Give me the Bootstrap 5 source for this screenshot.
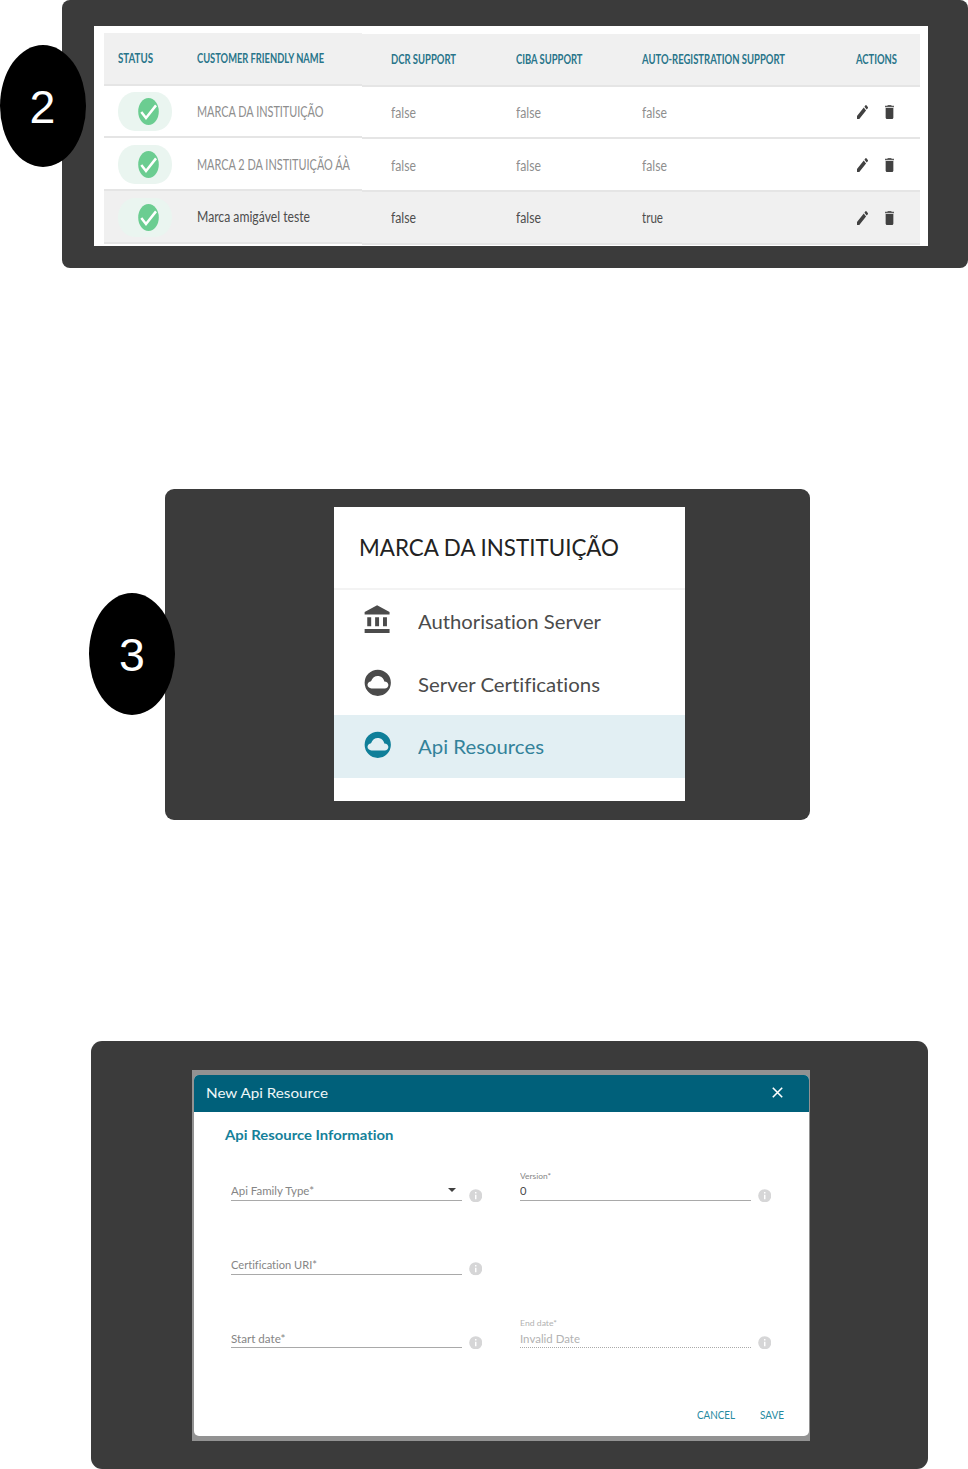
<!DOCTYPE html>
<html lang="pt-BR">
<head>
<meta charset="utf-8">
<meta name="viewport" content="width=device-width, initial-scale=1">
<title>Api Resources</title>
<link href="https://cdn.jsdelivr.net/npm/bootstrap@5.3.0/dist/css/bootstrap.min.css" rel="stylesheet">
<style>
body{font-family:Lato,"Open Sans",sans-serif;font-variant-ligatures:none;background:#fff;width:968px;height:1469px;overflow:hidden;line-height:1.2;color:#4b4b4b}
.panel{background:#3b3b3b}
.panel-a{margin-left:62px;width:906px;height:268px;border-radius:8px;padding:26px 40px 22px 32px}
.panel-b{margin:221px 0 0 165px;width:645px;height:331px;border-radius:9px;padding:18px 125px 19px 169px}
.panel-c{margin:221px 0 0 91px;width:837px;height:428px;border-radius:11px;padding:29px 118px 28px 101px}
.step{position:absolute;width:86px;height:122px;border-radius:50%;background:#000;color:#fff;font:46.5px/124px "Liberation Sans",Arial,sans-serif;text-align:center}
.step-2{left:-62px;top:45px;padding-right:1px}
.step-3{left:-76px;top:104px}
.fit{display:inline-block;white-space:nowrap;transform-origin:0 50%}
svg{display:block;flex:none}
/* brand table */
.sheet{height:220px;padding:6.600px 8px 0 10px}
.half-l{width:258px}
.half-r{width:558px;padding-top:1px}
.line{display:grid;align-items:center;height:52.8px;border-bottom:2px solid #e5e5e5;padding-top:1px;font-size:14.6px;color:#8e8e8e}
.half-l .line{grid-template-columns:79px 165px;padding-left:14px}
.half-r .line{grid-template-columns:124.5px 126px 214px 1fr;padding-left:29px}
.line>*{min-width:0}
.line.head{height:53px;background:#f0f0f0;color:#28758a;font-size:12.5px;font-weight:700}
.line.picked{background:#f0f0f0;color:#4d4d4d}
.pill{width:54px;height:39px;border-radius:17px/19px;background:#eaf5f0;padding:6px 0 0 20px}
.acts{padding-left:1px}
.acts .bin{margin-left:17px}
/* side menu */
.menu{height:294px}
.menu-title{height:83px;border-bottom:2px solid #f3f3f3;padding-left:25px;font-size:23px;color:#222}
.menu-item{height:62.5px;padding-left:28px;font-size:19.2px}
.menu-item .fit{padding-top:1px}
.menu-item svg{margin-right:24.5px;margin-top:-2.5px}
.menu-item.active{background:#e2eff3;color:#33829a}
.menu-item.active svg{color:#0f7f99}
/* dialog */
.backdrop-box{height:371px;background:#929292;padding:5px 1px 5px 2px}
.dialog{height:361px;border-radius:5px;overflow:hidden}
.dialog-head{height:36.5px;background:#00607a;color:#eef6f8;padding:0 26px 2px 12px;font-size:14.3px}
.dialog-title{padding:15.5px 0 0 30.5px;font-size:13.4px;font-weight:700;color:#15819a;height:50.500px}
.fields{display:grid;grid-template-columns:289px 289px;grid-auto-rows:73.7px;padding-left:37px}
.field{width:231px;height:39px;border-bottom:1px solid #a9a9a9;font-size:11.3px;color:#858585;padding-bottom:2px}
.tag{font-size:8.2px;margin-bottom:3.5px;line-height:9px}
.field.off{border-bottom:1px dotted #aaa;color:#b2b2b2}
.info{margin:26.500px 0 0 6.5px}
.foot{font-size:10.5px;color:#258a9f;padding:26px 0 0 503px}
</style>
</head>
<body>
<svg width="0" height="0" class="position-absolute">
  <symbol id="ok" viewBox="0 0 21 27"><ellipse cx="10.5" cy="13.5" rx="10.3" ry="13.4" fill="#6bcd91"/><path d="M3.300 14l4.700 6L18 7.400" fill="none" stroke="#fff" stroke-width="2.500"/></symbol>
  <symbol id="pen" viewBox="3 3 18 18" preserveAspectRatio="none"><path fill="#414141" d="M3 17.250V21h3.750L17.810 9.940l-3.750-3.750L3 17.250zM20.710 7.040a1 1 0 0 0 0-1.410l-2.340-2.340a1 1 0 0 0-1.410 0l-1.830 1.830 3.750 3.750 1.830-1.830z"/></symbol>
  <symbol id="bin" viewBox="5 3 14 18" preserveAspectRatio="none"><path fill="#414141" d="M6 19c0 1.100.9 2 2 2h8c1.100 0 2-.9 2-2V7H6v12z"/><path fill="#5c5c5c" d="M19 4h-3.500l-1-1h-5l-1 1H5v2h14V4z"/></symbol>
  <symbol id="cloud" viewBox="0 0 24 24"><path fill="currentColor" fill-rule="evenodd" d="M12 2a10 10 0 1 0 0 20a10 10 0 1 0 0-20zM17.300 16.300H7.200C5.500 16.300 4.200 15.200 4.200 13.600c0-1.400 1.100-2.500 2.700-2.800C7.900 8.300 9.700 6.900 12 6.900c2.500 0 4.500 1.700 5 4.100 1.900.1 3.100 1.200 3.100 2.700 0 1.500-1.200 2.600-2.800 2.600z"/></symbol>
  <symbol id="info" viewBox="0 0 14 14"><circle cx="7" cy="7" r="6.800" fill="#d6d6d7"/><path d="M7 3.200v1.500M7 6v4.600" stroke="#fff" stroke-width="1.500"/></symbol>
</svg>
<section class="panel panel-a position-relative">
  <div class="step step-2">2</div>
  <div class="sheet bg-white d-flex overflow-hidden">
    <div class="half-l">
      <div class="line head"><span><span class="fit" data-w="35">STATUS</span></span><span><span class="fit" data-w="127">CUSTOMER FRIENDLY NAME</span></span></div>
      <div class="line"><div class="pill"><svg width="21" height="27"><use href="#ok"/></svg></div><span><span class="fit" data-w="126.5">MARCA DA INSTITUIÇÃO</span></span></div>
      <div class="line"><div class="pill"><svg width="21" height="27"><use href="#ok"/></svg></div><span><span class="fit" data-w="153">MARCA 2 DA INSTITUIÇÃO ÁÀ</span></span></div>
      <div class="line picked"><div class="pill"><svg width="21" height="27"><use href="#ok"/></svg></div><span><span class="fit" data-w="113">Marca amigável teste</span></span></div>
    </div>
    <div class="half-r">
      <div class="line head"><span><span class="fit" data-w="65">DCR SUPPORT</span></span><span><span class="fit" data-w="66.5">CIBA SUPPORT</span></span><span><span class="fit" data-w="143">AUTO-REGISTRATION SUPPORT</span></span><span><span class="fit" data-w="41">ACTIONS</span></span></div>
      <div class="line"><span><span class="fit" data-w="25">false</span></span><span><span class="fit" data-w="25">false</span></span><span><span class="fit" data-w="25">false</span></span><div class="acts d-flex"><svg width="11" height="14"><use href="#pen"/></svg><svg class="bin" width="9" height="14"><use href="#bin"/></svg></div></div>
      <div class="line"><span><span class="fit" data-w="25">false</span></span><span><span class="fit" data-w="25">false</span></span><span><span class="fit" data-w="25">false</span></span><div class="acts d-flex"><svg width="11" height="14"><use href="#pen"/></svg><svg class="bin" width="9" height="14"><use href="#bin"/></svg></div></div>
      <div class="line picked"><span><span class="fit" data-w="25">false</span></span><span><span class="fit" data-w="25">false</span></span><span><span class="fit" data-w="21">true</span></span><div class="acts d-flex"><svg width="11" height="14"><use href="#pen"/></svg><svg class="bin" width="9" height="14"><use href="#bin"/></svg></div></div>
    </div>
  </div>
</section>

<section class="panel panel-b position-relative">
  <div class="step step-3">3</div>
  <nav class="menu bg-white">
    <div class="menu-title d-flex align-items-center"><span class="fit" data-w="260">MARCA DA INSTITUIÇÃO</span></div>
    <div class="menu-item d-flex align-items-center"><svg width="31.5" height="31.5" viewBox="0 0 24 24" fill="currentColor"><path d="M4 10v7h3v-7H4zm6 0v7h3v-7h-3zM2 22h19v-3H2v3zm14-12v7h3v-7h-3zm-4.500-9L2 6v2h19V6l-9.500-5z"/></svg><span class="fit" data-w="183">Authorisation Server</span></div>
    <div class="menu-item d-flex align-items-center"><svg width="31.5" height="31.5"><use href="#cloud"/></svg><span class="fit" data-w="182">Server Certifications</span></div>
    <div class="menu-item active d-flex align-items-center"><svg width="31.5" height="31.5"><use href="#cloud"/></svg><span class="fit" data-w="126">Api Resources</span></div>
  </nav>
</section>

<section class="panel panel-c">
  <div class="backdrop-box">
    <div class="dialog bg-white">
      <div class="dialog-head d-flex align-items-center justify-content-between"><span class="fit" data-w="122">New Api Resource</span><svg width="11" height="11" viewBox="0 0 11 11" stroke="#fff" stroke-width="1.6"><path d="M.8.8l9.400 9.400M10.200.8L.8 10.200"/></svg></div>
      <div class="dialog-title"><span class="fit" data-w="168.500">Api Resource Information</span></div>
      <div class="fields">
        <div class="d-flex"><div class="field d-flex align-items-end justify-content-between"><span class="fit" data-w="83">Api Family Type*</span><svg class="me-1" width="10" height="11" viewBox="0 0 10 11"><path d="M0 1h8L4 5z" fill="#404040"/></svg></div><svg class="info" width="13.500" height="13.500"><use href="#info"/></svg></div>
        <div class="d-flex"><div class="field d-flex flex-column justify-content-end align-items-start"><span class="tag fit" data-w="31">Version*</span><span class="fit" data-w="6.500" style="color:#4a4a4a">0</span></div><svg class="info" width="13.500" height="13.500"><use href="#info"/></svg></div>
        <div class="d-flex"><div class="field d-flex align-items-end"><span class="fit" data-w="86">Certification URI*</span></div><svg class="info" width="13.500" height="13.500"><use href="#info"/></svg></div>
        <div></div>
        <div class="d-flex"><div class="field d-flex align-items-end"><span class="fit" data-w="54.500">Start date*</span></div><svg class="info" width="13.500" height="13.500"><use href="#info"/></svg></div>
        <div class="d-flex"><div class="field off d-flex flex-column justify-content-end align-items-start"><span class="tag fit" data-w="37">End date*</span><span class="fit" data-w="60">Invalid Date</span></div><svg class="info" width="13.500" height="13.500"><use href="#info"/></svg></div>
      </div>
      <div class="foot d-flex"><span style="width:63px"><span class="fit" data-w="38">CANCEL</span></span><span class="fit" data-w="24">SAVE</span></div>
    </div>
  </div>
</section>
<script src="https://cdn.jsdelivr.net/npm/bootstrap@5.3.0/dist/js/bootstrap.bundle.min.js"></script>
<script>
// Condense or widen each label to the width it has in the design
document.querySelectorAll('.fit').forEach(function (el) {
  el.style.transform = 'scaleX(' + (el.dataset.w / el.getBoundingClientRect().width) + ')';
});
</script>
</body>
</html>
